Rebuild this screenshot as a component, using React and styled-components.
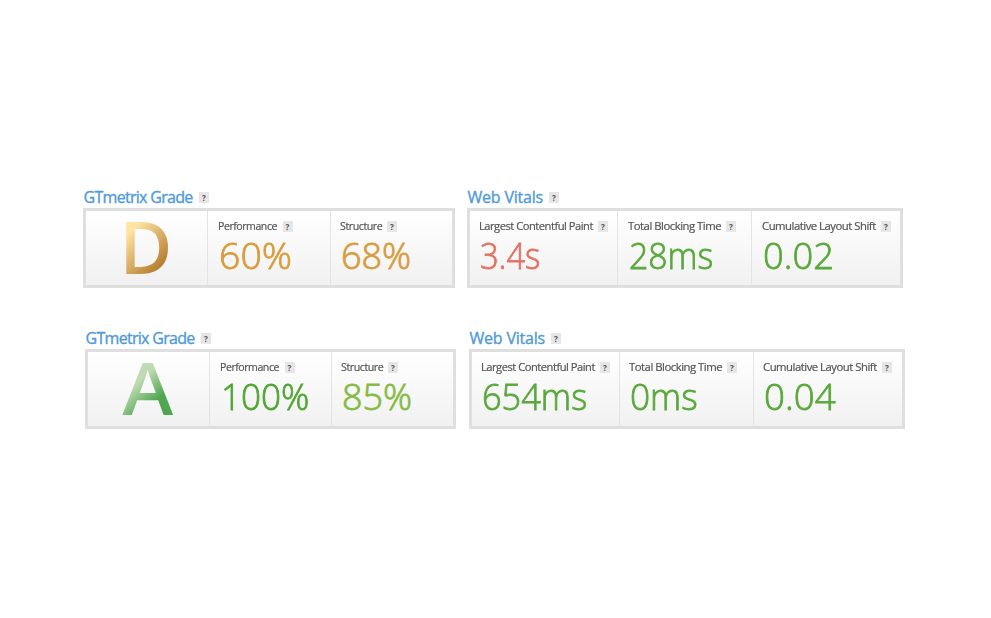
import React from 'react';
import styled, { createGlobalStyle } from "styled-components";

const reports = [
    {
        id: "before",
        left: 83,
        gap: 12,
        grade: { letter: "D", stretch: 1, colors: "#ffe4a3 25%, #b98234 76%" },
        scores: [
            { label: "Performance", labelWidth: 61, labelStretch: 0.92, value: "60%", stretch: 1.04, color: "#d99c3c", width: 123 },
            { label: "Structure", labelWidth: 43, labelStretch: 0.93, value: "68%", stretch: 1, color: "#d99c3c", width: 122 },
        ],
        vitals: [
            { label: "Largest Contentful Paint", labelWidth: 115, labelStretch: 0.97, value: "3.4s", stretch: 0.91, color: "#e07363", width: 147, indent: 9 },
            { label: "Total Blocking Time", labelWidth: 94, labelStretch: 0.985, value: "28ms", stretch: 0.94, color: "#5aa83c", width: 134, indent: 10 },
            { label: "Cumulative Layout Shift", labelWidth: 115, labelStretch: 0.985, value: "0.02", stretch: 1.01, color: "#5aa83c", width: 149, indent: 10 },
        ],
    },
    {
        id: "after",
        left: 85,
        gap: 13,
        grade: { letter: "A", stretch: 1.07, colors: "#bfdbb2 38%, #4fa650 68%" },
        scores: [
            { label: "Performance", labelWidth: 61, labelStretch: 0.92, value: "100%", stretch: 0.975, color: "#4fa633", width: 122 },
            { label: "Structure", labelWidth: 43, labelStretch: 0.93, value: "85%", stretch: 1, color: "#85bb45", width: 122 },
        ],
        vitals: [
            { label: "Largest Contentful Paint", labelWidth: 115, labelStretch: 0.97, value: "654ms", stretch: 0.955, color: "#5aa83c", width: 147 },
            { label: "Total Blocking Time", labelWidth: 94, labelStretch: 0.985, value: "0ms", stretch: 0.98, color: "#5aa83c", width: 134 },
            { label: "Cumulative Layout Shift", labelWidth: 115, labelStretch: 0.985, value: "0.04", stretch: 1.02, color: "#5aa83c", width: 149 },
        ],
    },
];

function Metric({ metric }) {
    return (
        <Cell $width={metric.width} $indent={metric.indent}>
            <LabelRow>
                <Label $width={metric.labelWidth}>
                    <LabelText $stretch={metric.labelStretch}>{metric.label}</LabelText>
                </Label>
                <Help>?</Help>
            </LabelRow>
            <Value $color={metric.color} $stretch={metric.stretch}>{metric.value}</Value>
        </Cell>
    )
}

function App() {
    return (
        <Container>
            <GlobalStyle />
            {reports.map((report) => (
                <Report key={report.id} $left={report.left} $gap={report.gap}>
                    <section>
                        <Heading>
                            <Title $width={110} $spacing={-0.7}>GTmetrix Grade</Title>
                            <Help>?</Help>
                        </Heading>
                        <Panel>
                            <GradeCell>
                                <Grade $colors={report.grade.colors} $stretch={report.grade.stretch}>{report.grade.letter}</Grade>
                            </GradeCell>
                            {report.scores.map((metric) => <Metric key={metric.label} metric={metric} />)}
                        </Panel>
                    </section>
                    <section>
                        <Heading>
                            <Title $width={76} $spacing={-0.2}>Web Vitals</Title>
                            <Help>?</Help>
                        </Heading>
                        <Panel>
                            {report.vitals.map((metric) => <Metric key={metric.label} metric={metric} />)}
                        </Panel>
                    </section>
                </Report>
            ))}
        </Container>
    )
}

export default App

const GlobalStyle = createGlobalStyle`
    * {
        box-sizing: border-box;
    }

    body {
        margin: 0;
        background: #fff;
        font-family: "Open Sans", "Noto Sans", sans-serif;
    }
`

const Container = styled.main`
    height: 618px;
    padding-top: 187px;
    display: flex;
    flex-direction: column;
    gap: 40px;
    overflow: hidden;
`

const Report = styled.div`
    display: flex;
    gap: ${(props) => props.$gap}px;
    padding-left: ${(props) => props.$left}px;
`

const Heading = styled.div`
    display: flex;
    align-items: center;
    gap: 6px;
    height: 21px;
`

const Title = styled.h2`
    width: ${(props) => props.$width}px;
    margin: 0;
    padding: 0 0 2px 0.5px;
    color: #4f9ad8;
    font-size: 16px;
    font-weight: 400;
    line-height: 20px;
    letter-spacing: ${(props) => props.$spacing}px;
    white-space: nowrap;
    -webkit-text-stroke: 0.35px currentColor;
`

const Help = styled.span`
    flex: none;
    width: 10px;
    height: 11px;
    background: #e6e6e6;
    color: #555;
    font-size: 8px;
    font-weight: 700;
    line-height: 11px;
    text-align: center;
`

const Panel = styled.div`
    display: flex;
    width: max-content;
    height: 80px;
    border: 3px solid #dfdfdf;
    background: linear-gradient(#fff, #f1f1f1);
`

const GradeCell = styled.div`
    width: 121px;
    padding: 0 1px 5px 0;
    display: flex;
    align-items: center;
    justify-content: center;
`

const Grade = styled.span`
    background: linear-gradient(135deg, ${(props) => props.$colors});
    background-clip: text;
    color: transparent;
    font-size: 72px;
    font-weight: 600;
    line-height: 72px;
    transform: scaleX(${(props) => props.$stretch});
`

const Cell = styled.div`
    width: ${(props) => props.$width}px;
    padding: 8px 0 0 ${(props) => props.$indent || 9}px;

    & + & {
        border-left: 1px solid #e4e4e4;
    }

    ${GradeCell} + & {
        padding-left: 9.5px;
        border-left: 1px solid #e4e4e4;
    }
`

const LabelRow = styled.div`
    display: flex;
    align-items: center;
    gap: 4px;
    height: 14px;
`

const Label = styled.span`
    flex: none;
    width: ${(props) => props.$width}px;
    color: #555;
    font-size: 11.5px;
    line-height: 14px;
    letter-spacing: -0.5px;
    white-space: nowrap;
    -webkit-text-stroke: 0.2px currentColor;
`

const LabelText = styled.span`
    display: inline-block;
    transform: scaleX(${(props) => props.$stretch});
    transform-origin: left;
`

const Value = styled.div`
    width: max-content;
    padding-left: 1px;
    color: ${(props) => props.$color};
    font-size: 36px;
    font-weight: 300;
    line-height: 46px;
    white-space: nowrap;
    transform: scaleX(${(props) => props.$stretch});
    transform-origin: left;
    -webkit-text-stroke: 0.8px currentColor;
`
